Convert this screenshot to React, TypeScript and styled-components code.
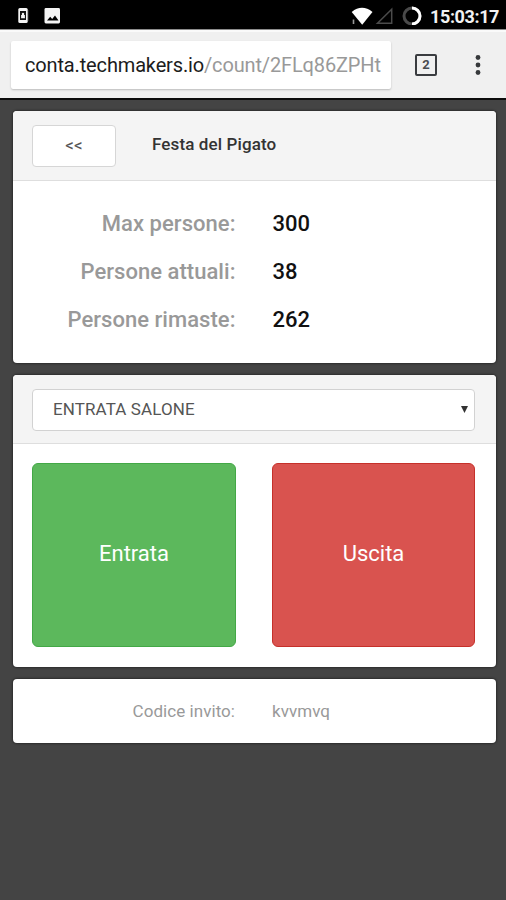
import React from "react";
import styled, { createGlobalStyle } from "styled-components";

const GlobalStyle = createGlobalStyle`
  *, *::before, *::after { box-sizing: border-box; }
  body { margin: 0; background: #444; font-family: Roboto, "Liberation Sans", sans-serif; }
`;

const Screen = styled.div`
  width: 506px;
  height: 900px;
  display: flex;
  flex-direction: column;
  overflow: hidden;
  background: #444;
`;

const StatusBar = styled.header`
  height: 30px;
  flex: none;
  display: flex;
  align-items: center;
  justify-content: space-between;
  padding: 0 7px 0 17px;
  background: #000;
  border-bottom: 1px solid #8c8c8c;
`;

const StatusGroup = styled.div`
  display: flex;
  align-items: center;
`;

const NotificationIcons = styled.svg`
  width: 46px;
  height: 18px;
  display: block;
`;

const SignalIcons = styled.svg`
  width: 76px;
  height: 20px;
  display: block;
  margin-right: 7px;
`;

const Clock = styled.time`
  font-size: 18px;
  font-weight: 700;
  line-height: 20px;
  letter-spacing: -0.4px;
  color: #f2f2f2;
  padding-top: 4px;
  white-space: nowrap;
`;

const BrowserBar = styled.div`
  height: 70px;
  flex: none;
  display: flex;
  align-items: flex-start;
  padding: 10px 0 0 11px;
  background: #f0f0f0;
  border-top: 2px solid #fafafa;
  border-bottom: 2px solid #0c0c0c;
`;

const AddressField = styled.div`
  width: 380px;
  height: 48px;
  margin-top: -1px;
  display: flex;
  align-items: center;
  padding: 0 0 1px 14px;
  background: #fff;
  border-radius: 2px;
  box-shadow: 0 1px 2px rgba(0, 0, 0, 0.22);
  font-size: 20px;
  letter-spacing: -0.15px;
  white-space: nowrap;
  color: #999;
`;

const Host = styled.span`
  color: #1c1c1c;
`;

const TabCount = styled.div`
  width: 22px;
  height: 22px;
  margin: 12px 0 0 24px;
  display: flex;
  align-items: center;
  justify-content: center;
  border: 2px solid #3a3c40;
  border-radius: 2px;
  font-size: 13px;
  font-weight: 700;
  line-height: 18px;
  color: #4a4c50;
`;

const MenuIcon = styled.svg`
  width: 8px;
  height: 22px;
  display: block;
  margin: 12px 0 0 37px;
  fill: #36383b;
`;

const Page = styled.main`
  display: flex;
  flex-direction: column;
  gap: 12px;
  padding: 11px 10px 0 13px;
`;

const Card = styled.section<{ $height: number }>`
  width: 482.5px;
  height: ${({ $height }) => $height}px;
  background: #fff;
  border-radius: 4px;
  overflow: hidden;
  box-shadow: 0 0 2px 1px rgba(0, 0, 0, 0.35);
`;

const CardHeader = styled.div<{ $height: number }>`
  height: ${({ $height }) => $height}px;
  display: flex;
  align-items: flex-start;
  padding: 14px 20px 0 19px;
  background: #f4f4f4;
  border-bottom: 1px solid #dedede;
`;

const BackButton = styled.button`
  width: 84px;
  height: 42px;
  padding: 0 0 3px;
  background: #fff;
  border: 1px solid #d6d6d6;
  border-radius: 4px;
  font: 17px Roboto, sans-serif;
  color: #555;
`;

const Title = styled.h1`
  margin: 9px 0 0 36px;
  font-size: 17px;
  font-weight: 500;
  line-height: 20px;
  letter-spacing: 0.12px;
  color: #333;
`;

const Stats = styled.dl`
  display: grid;
  grid-template-columns: 222.5px 1fr;
  grid-auto-rows: 48px;
  column-gap: 37px;
  align-items: center;
  margin: 0;
  padding-top: 18.5px;
  font-size: 22px;
  font-weight: 500;
  line-height: 26px;
`;

const StatLabel = styled.dt`
  text-align: right;
  letter-spacing: 0.04px;
  color: #999;
`;

const StatValue = styled.dd`
  margin: 0;
  color: #111;
`;

const GateSelect = styled.button`
  width: 443px;
  height: 42px;
  display: flex;
  align-items: center;
  justify-content: space-between;
  padding: 0 6px 2px 20px;
  background: #fff;
  border: 1px solid #d2d2d2;
  border-radius: 4px;
  font: 17px Roboto, sans-serif;
  letter-spacing: 0.1px;
  color: #555;
`;

const SelectArrow = styled.svg`
  width: 7px;
  height: 7px;
  margin-top: 1px;
  fill: #333;
`;

const Actions = styled.div`
  display: grid;
  grid-template-columns: 204px 203px;
  column-gap: 36px;
  padding: 19px 19px 0;
`;

const ActionButton = styled.button<{ $tone: string; $edge: string }>`
  height: 184px;
  padding: 0 0 4px;
  border: 1px solid ${({ $edge }) => $edge};
  border-radius: 6px;
  background: ${({ $tone }) => $tone};
  color: #fff;
  font: 22px Roboto, sans-serif;
`;

const Invite = styled.div`
  height: 100%;
  display: grid;
  grid-template-columns: 222px 1fr;
  column-gap: 37px;
  align-items: center;
  padding-bottom: 1px;
  font-size: 17px;
  letter-spacing: 0.05px;
  color: #999;
`;

const InviteLabel = styled.span`
  text-align: right;
`;

const stats = [
  { label: "Max persone:", value: 300 },
  { label: "Persone attuali:", value: 38 },
  { label: "Persone rimaste:", value: 262 },
];

export default function App() {
  return (
    <>
      <GlobalStyle />
      <Screen>
        <StatusBar>
          <NotificationIcons viewBox="0 0 46 18">
            <rect x="1.3" y="2" width="9.4" height="15" rx="1.5" fill="#f4f4f4" />
            <path d="M10.7 4v11" stroke="#aaa" strokeWidth="1" />
            <rect x="3" y="5" width="6" height="9" fill="#111" />
            <path d="M4.1 12.3V9h.8V7.3q1.1-1 2.2 0V9h.8v3.3Z" fill="#f4f4f4" />
            <rect x="27.5" y="2" width="15.5" height="15.5" rx="1.4" fill="#f4f4f4" />
            <path d="M30 14.5l3.2-3.8 2 2.4 2.8-3.6 3.5 5Z" fill="#000" />
          </NotificationIcons>
          <StatusGroup>
            <SignalIcons viewBox="0 0 76 20">
              <path d="M4.7 7Q15-1.4 25.5 7L15.2 19.7Z" fill="#fff" />
              <path d="M6.5 14.5v4.5" stroke="#999" strokeWidth="1.6" />
              <path d="M30.5 18.2H44.7V4.2Z" fill="none" stroke="#4b4b4b" strokeWidth="1.5" />
              <circle cx="65" cy="11" r="8" fill="none" stroke="#4a4a4a" strokeWidth="3" />
              <path d="M65 3a8 8 0 0 1 0 16" fill="none" stroke="#fff" strokeWidth="3" />
            </SignalIcons>
            <Clock>15:03:17</Clock>
          </StatusGroup>
        </StatusBar>
        <BrowserBar>
          <AddressField><Host>conta.techmakers.io</Host>/count/2FLq86ZPHt</AddressField>
          <TabCount>2</TabCount>
          <MenuIcon viewBox="0 0 8 22">
            <circle cx="4" cy="3.5" r="2.4" />
            <circle cx="4" cy="11" r="2.4" />
            <circle cx="4" cy="18.5" r="2.4" />
          </MenuIcon>
        </BrowserBar>
        <Page>
          <Card $height={252}>
            <CardHeader $height={70}>
              <BackButton>&lt;&lt;</BackButton>
              <Title>Festa del Pigato</Title>
            </CardHeader>
            <Stats>
              {stats.map(({ label, value }) => (
                <React.Fragment key={label}>
                  <StatLabel>{label}</StatLabel>
                  <StatValue>{value}</StatValue>
                </React.Fragment>
              ))}
            </Stats>
          </Card>
          <Card $height={292}>
            <CardHeader $height={69}>
              <GateSelect>
                ENTRATA SALONE
                <SelectArrow viewBox="0 0 7 7"><path d="M0 0h7L3.5 7Z" /></SelectArrow>
              </GateSelect>
            </CardHeader>
            <Actions>
              <ActionButton $tone="#5cb85c" $edge="#43a846">Entrata</ActionButton>
              <ActionButton $tone="#d9534f" $edge="#c5302a">Uscita</ActionButton>
            </Actions>
          </Card>
          <Card $height={64}>
            <Invite>
              <InviteLabel>Codice invito:</InviteLabel>
              <span>kvvmvq</span>
            </Invite>
          </Card>
        </Page>
      </Screen>
    </>
  );
}
